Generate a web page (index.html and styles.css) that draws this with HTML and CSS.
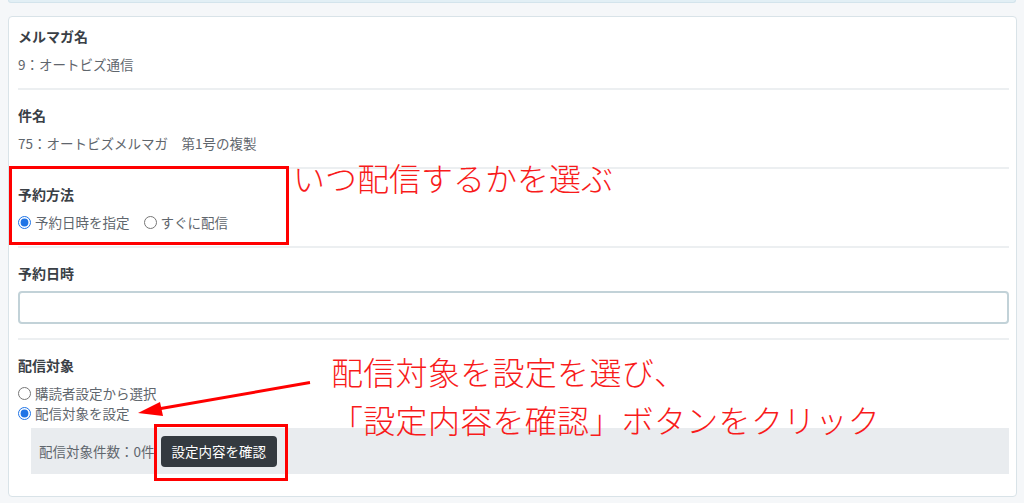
FILE: index.html
```html
<!DOCTYPE html>
<html lang="ja">
<head>
<meta charset="utf-8">
<meta name="viewport" content="width=device-width, initial-scale=1">
<title>メルマガ配信予約</title>
<link rel="stylesheet" href="styles.css">
</head>
<body>
<div class="page">
  <div class="prev-card"></div>

  <div class="card">
    <div class="field">
      <div class="field-label">メルマガ名</div>
      <div class="field-value">9：オートビズ通信</div>
    </div>
    <div class="field">
      <div class="field-label">件名</div>
      <div class="field-value">75：オートビズメルマガ　第1号の複製</div>
    </div>
    <div class="field">
      <div class="field-label">予約方法</div>
      <div class="radio-row">
        <label class="radio"><input type="radio" name="method" checked>予約日時を指定</label>
        <label class="radio"><input type="radio" name="method">すぐに配信</label>
      </div>
    </div>
    <div class="field">
      <div class="field-label">予約日時</div>
      <input class="text-input" type="text">
    </div>
    <div class="field last">
      <div class="field-label">配信対象</div>
      <div class="radio-stack">
        <label class="radio"><input type="radio" name="target">購読者設定から選択</label>
        <label class="radio"><input type="radio" name="target" checked>配信対象を設定</label>
      </div>
      <div class="target-box">
        <span class="target-count">配信対象件数：0件</span>
        <button class="btn-dark" type="button">設定内容を確認</button>
      </div>
    </div>
  </div>

  <!-- annotations drawn over the screenshot -->
  <div class="callout-box box-method"></div>
  <div class="callout-box box-confirm"></div>
  <p class="callout-text note-method">いつ配信するかを選ぶ</p>
  <p class="callout-text note-target">配信対象を設定を選び、<br>「設定内容を確認」ボタンをクリック</p>
  <svg class="callout-arrow" width="1024" height="503" viewBox="0 0 1024 503">
    <line x1="310" y1="382.5" x2="158" y2="409" stroke="#ff0000" stroke-width="3"/>
    <polygon points="138,413 163,416 160,402" fill="#ff0000"/>
  </svg>
</div>
</body>
</html>
```

FILE: styles.css
```css
:root{
  --bg:#f5f7f9; --line:#eceff1; --ink:#343a40; --muted:#5f666d;
  --red:#ff0000;
}
*{box-sizing:border-box;}
html,body{margin:0;padding:0;}
body{
  font-family:'Noto Sans CJK JP','Noto Sans',sans-serif;
  background:var(--bg);
  color:var(--ink);
  overflow:hidden;
}
.page{ position:relative; width:1024px; height:503px; }

.prev-card{ height:3px; margin:0 8px 13px 8px; background:#e2eff5; border:1px solid #d3e4ec; border-top:none; border-radius:0 0 4px 4px; }

.card{ margin:0 7px 0 8px; background:#fff; border:1px solid #d9e3e8; border-radius:4px; padding:0 7px 0 9px; }
.field{ padding:15px 0 14px; border-bottom:2px solid var(--line); }
.field:first-child{ padding-top:9px; }
.field.last{ border-bottom:none; padding-bottom:22px; }
.field-label{ font-size:14px; font-weight:700; line-height:20px; margin-bottom:8px; color:#3a4046; }
.field-value{ font-size:13.5px; line-height:20px; color:var(--muted); }

.radio-row{ display:flex; gap:14px; }
.radio-stack{ display:flex; flex-direction:column; }
.radio{ display:inline-flex; align-items:center; font-size:13.5px; line-height:20px; color:var(--muted); }
.radio input{ margin:0 4px 0 0; width:13px; height:13px; accent-color:#1f74e6; }

.text-input{ display:block; width:100%; height:33px; border:2px solid #c2d2d8; border-radius:4px; background:#fff; margin:0; }

.target-box{ display:flex; align-items:center; gap:6px; margin:5px 0 0 13px; height:46px; padding:0 8px; background:#e9ecef; }
.target-count{ font-size:13.5px; color:var(--muted); }
.btn-dark{ height:31px; padding:0 11px; border:none; border-radius:4px; background:#343a40; color:#fff; font-family:inherit; font-size:13.5px; }

/* ---- red annotations ---- */
.callout-box{ position:absolute; border:3px solid var(--red); }
.box-method{ left:9px; top:166px; width:280px; height:79px; }
.box-confirm{ left:154px; top:424px; width:134px; height:57px; }
.callout-text{ position:absolute; margin:0; color:#f81b1b; font-size:32px; font-weight:300; white-space:nowrap; }
.note-method{ left:293px; top:157px; line-height:40px; }
.note-target{ left:331px; top:347px; line-height:48px; letter-spacing:.3px; }
.callout-arrow{ position:absolute; left:0; top:0; pointer-events:none; }
```
